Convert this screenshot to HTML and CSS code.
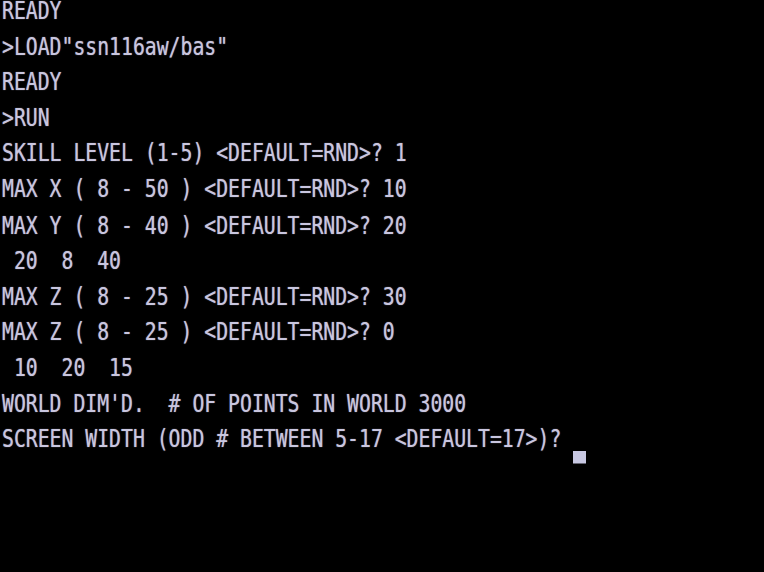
FILE: index.html
```html
<!DOCTYPE html>
<html>
<head>
<meta charset="utf-8">
<link rel="stylesheet" href="styles.css">
</head>
<body>
<div class="screen">
<div class="line">READY</div>
<div class="line">&gt;LOAD"ssn116aw/bas"</div>
<div class="line">READY</div>
<div class="line">&gt;RUN</div>
<div class="line">SKILL LEVEL (1-5) &lt;DEFAULT=RND&gt;? 1</div>
<div class="line">MAX X ( 8 - 50 ) &lt;DEFAULT=RND&gt;? 10</div>
<div class="line">MAX Y ( 8 - 40 ) &lt;DEFAULT=RND&gt;? 20</div>
<div class="line"> 20  8  40</div>
<div class="line">MAX Z ( 8 - 25 ) &lt;DEFAULT=RND&gt;? 30</div>
<div class="line">MAX Z ( 8 - 25 ) &lt;DEFAULT=RND&gt;? 0</div>
<div class="line"> 10  20  15</div>
<div class="line">WORLD DIM'D.  # OF POINTS IN WORLD 3000</div>
<div class="line">SCREEN WIDTH (ODD # BETWEEN 5-17 &lt;DEFAULT=17&gt;)? <span class="cursor"></span></div>
</div>
</body>
</html>
```
FILE: styles.css
```css
html, body {
  margin: 0;
  padding: 0;
  background: #000;
  width: 764px;
  height: 572px;
  overflow: hidden;
}
.screen {
  font-family: "DejaVu Sans Mono", "Liberation Mono", monospace;
  font-size: 19.77px;
  line-height: 28.6px;
  color: #c9c6df;
  padding-left: 2px;
  transform: translateY(-6.5px) scaleY(1.25);
  transform-origin: 0 0;
  text-shadow: 0 0 1px rgba(200, 196, 230, 0.7);
}
.line {
  height: 28.6px;
  white-space: pre;
}
.cursor {
  display: inline-block;
  width: 13px;
  height: 10.4px;
  background: #c8c8e2;
  vertical-align: -12.85px;
}
```
